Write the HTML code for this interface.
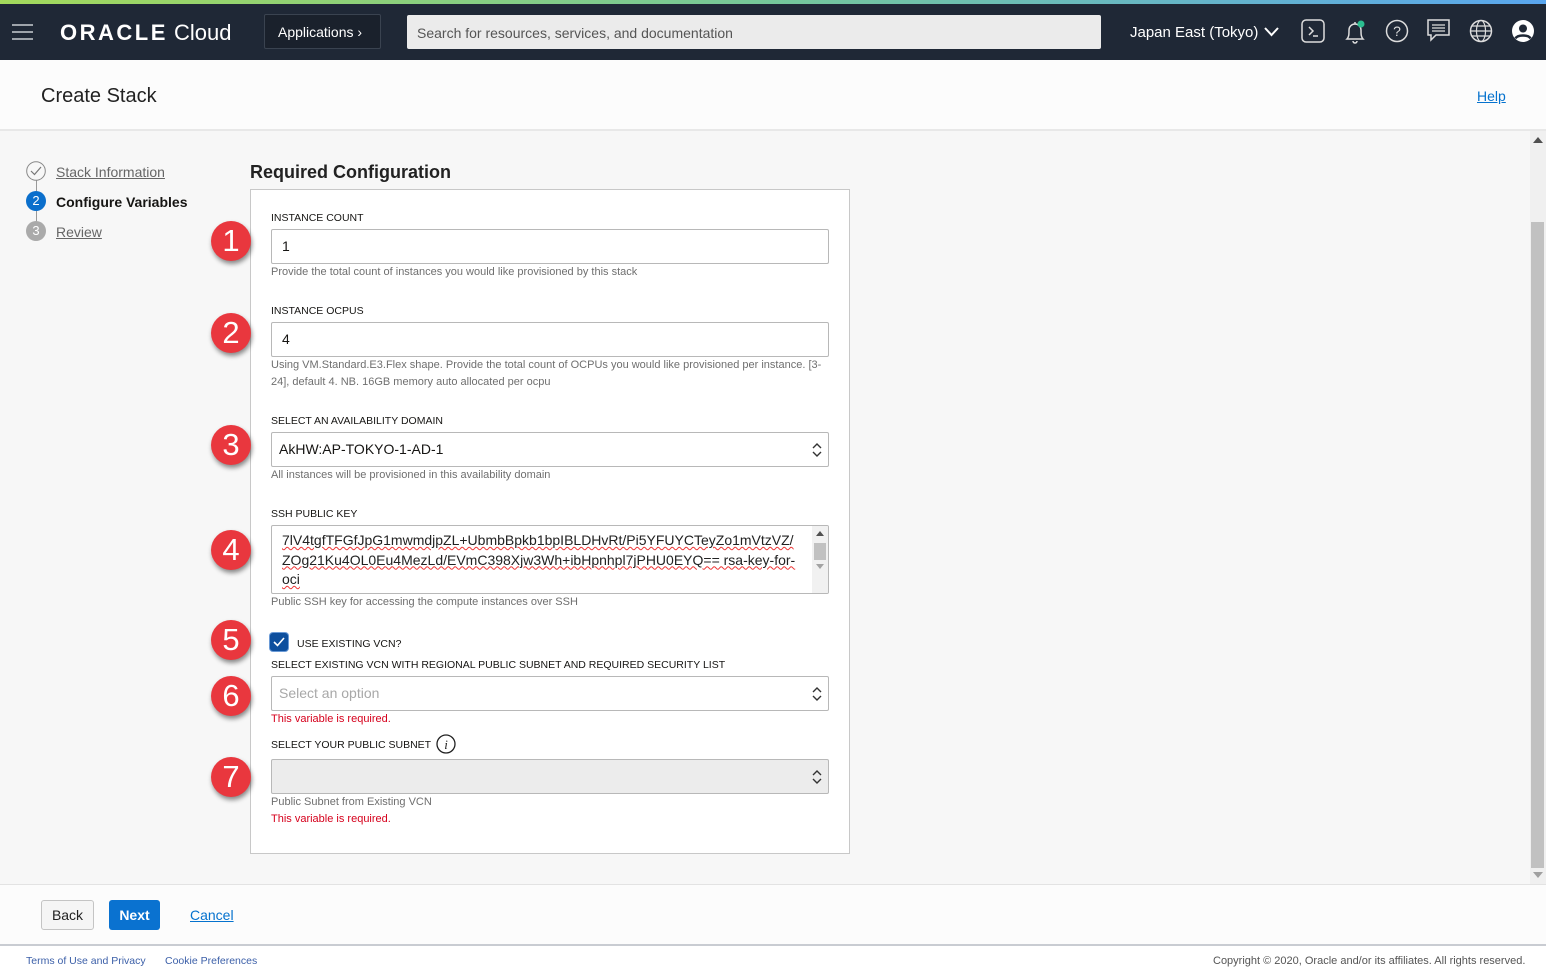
<!DOCTYPE html>
<html><head><meta charset="utf-8"><style>
*{box-sizing:border-box;margin:0;padding:0}
body{width:1546px;height:975px;position:relative;overflow:hidden;font-family:"Liberation Sans",Arial,sans-serif;background:#fff;color:#161513}
.a{position:absolute}
.lbl{position:absolute;left:271px;font-size:10.5px;color:#161513;white-space:nowrap}
.hlp{position:absolute;left:271px;font-size:11px;color:#6f6f6f;white-space:nowrap}
.err{position:absolute;left:271px;font-size:11px;color:#d6001c}
.inp{position:absolute;left:271px;width:558px;height:35px;border:1px solid #b8b8b8;border-radius:2px;background:#fff;font-size:14px;padding:0 0 0 10px;line-height:33px}
.sel{padding-left:7px}
.arr{position:absolute;right:6px;top:9px}
.badge{position:absolute;left:211px;width:40px;height:40px;border-radius:50%;background:#e9373e;color:#fff;font-size:31px;text-align:center;line-height:40px;box-shadow:1px 3px 5px rgba(0,0,0,.45)}
.ico{position:absolute;top:19px}
</style></head><body>
<div class="a" style="left:0;top:0;width:1546px;height:4px;background:linear-gradient(90deg,#a3d95c,#75c79a 50%,#59a6ef)"></div>
<div class="a" style="left:0;top:4px;width:1546px;height:56px;background:#1f2836"></div>
<svg class="a" style="left:12px;top:24px" width="22" height="16"><g stroke="#c9cdd2" stroke-width="1.6"><line x1="0" y1="1" x2="21" y2="1"/><line x1="0" y1="8" x2="21" y2="8"/><line x1="0" y1="15" x2="21" y2="15"/></g></svg>
<div class="a" style="left:60px;top:20px;color:#fff;font-size:22px;white-space:nowrap"><b style="font-weight:bold;letter-spacing:2.5px">ORACLE</b> Cloud</div>
<div class="a" style="left:264px;top:14px;width:117px;height:35px;border:1px solid #3a4350;border-radius:2px;background:#1a212c;color:#fff;font-size:14px;line-height:35px;padding-left:13px">Applications ›</div>
<div class="a" style="left:407px;top:15px;width:694px;height:34px;background:#ebebeb;border-radius:2px;color:#555;font-size:14px;line-height:36px;padding-left:10px">Search for resources, services, and documentation</div>
<div class="a" style="left:1130px;top:24px;color:#fff;font-size:15px">Japan East (Tokyo)</div>
<svg class="a" style="left:1264px;top:27px" width="15" height="10"><path d="M1 1L7.5 8L14 1" stroke="#fff" stroke-width="2" fill="none"/></svg>
<svg class="ico a" style="left:1301px" width="24" height="24"><rect x="1" y="1" width="22" height="22" rx="4" stroke="#ddd" stroke-width="1.5" fill="none"/><path d="M8 8l4 4-4 4M12 17h5" stroke="#ddd" stroke-width="1.5" fill="none"/></svg>
<svg class="ico a" style="left:1343px" width="24" height="26"><path d="M4 20c2-2 2-5 2-9a6 6 0 0112 0c0 4 0 7 2 9z M10 22a2 2 0 004 0M12 3v2" stroke="#ddd" stroke-width="1.5" fill="none"/><circle cx="18" cy="5" r="3.5" fill="#2bbf91"/></svg>
<svg class="ico a" style="left:1385px" width="24" height="24"><circle cx="12" cy="12" r="10.5" stroke="#ddd" stroke-width="1.5" fill="none"/><text x="12" y="17" font-size="14" fill="#ddd" text-anchor="middle" font-family="Liberation Sans">?</text></svg>
<svg class="ico a" style="left:1427px" width="24" height="24"><path d="M1 1h21v15H9l-5 5v-5H1z" stroke="#ddd" stroke-width="1.5" fill="none"/><path d="M5 6h13M5 9h13M5 12h13" stroke="#ddd" stroke-width="1.2"/></svg>
<svg class="ico a" style="left:1469px" width="24" height="24"><circle cx="12" cy="12" r="10.5" stroke="#ddd" stroke-width="1.5" fill="none"/><ellipse cx="12" cy="12" rx="4.5" ry="10.5" stroke="#ddd" stroke-width="1.2" fill="none"/><path d="M1.5 12h21M3 7h18M3 17h18" stroke="#ddd" stroke-width="1.2"/></svg>
<svg class="ico a" style="left:1511px" width="24" height="24"><circle cx="12" cy="12" r="11" fill="#fff"/><circle cx="12" cy="9.5" r="4" fill="#1f2836"/><path d="M4.5 19.5c2-4 13-4 15 0" stroke="#1f2836" stroke-width="2.5" fill="none"/></svg>

<div class="a" style="left:0;top:60px;width:1546px;height:71px;background:#fcfcfc;border-bottom:2px solid #e8e8e8"></div>
<div class="a" style="left:41px;top:85px;font-size:20px;color:#222">Create Stack</div>
<div class="a" style="left:1477px;top:88px;font-size:14px;color:#0572ce;text-decoration:underline">Help</div>

<div class="a" style="left:0;top:131px;width:1530px;height:753px;background:#f7f7f7"></div>
<div class="a" style="left:1530px;top:131px;width:16px;height:753px;background:#f0f0f0"></div>
<div class="a" style="left:1531px;top:222px;width:13px;height:646px;background:#c1c1c1"></div>
<svg class="a" style="left:1533px;top:137px" width="10" height="6"><path d="M0 6L5 0L10 6z" fill="#505050"/></svg>
<svg class="a" style="left:1533px;top:872px" width="10" height="6"><path d="M0 0L5 6L10 0z" fill="#a0a0a0"/></svg>

<div class="a" style="left:36px;top:180px;width:1px;height:42px;background:#999"></div>
<svg class="a" style="left:26px;top:161px" width="20" height="20"><circle cx="10" cy="10" r="9.3" fill="#f7f7f7" stroke="#888" stroke-width="1"/><path d="M5 10l3.5 3.5L15 6" stroke="#777" stroke-width="1.2" fill="none"/></svg>
<div class="a" style="left:56px;top:164px;font-size:14px;color:#666;text-decoration:underline">Stack Information</div>
<div class="a" style="left:26px;top:191px;width:20px;height:20px;border-radius:50%;background:#0b6fcc;color:#fff;font-size:13px;text-align:center;line-height:20px">2</div>
<div class="a" style="left:56px;top:194px;font-size:14px;font-weight:bold">Configure Variables</div>
<div class="a" style="left:26px;top:221px;width:20px;height:20px;border-radius:50%;background:#aaa;color:#fff;font-size:13px;text-align:center;line-height:20px">3</div>
<div class="a" style="left:56px;top:224px;font-size:14px;color:#666;text-decoration:underline">Review</div>

<div class="a" style="left:250px;top:162px;font-size:18px;font-weight:bold;color:#222">Required Configuration</div>
<div class="a" style="left:250px;top:189px;width:600px;height:665px;background:#fff;border:1px solid #c8c8c8"></div>

<div class="lbl" style="top:212px">INSTANCE COUNT</div>
<div class="inp" style="top:229px">1</div>
<div class="hlp" style="top:266px">Provide the total count of instances you would like provisioned by this stack</div>

<div class="lbl" style="top:305px">INSTANCE OCPUS</div>
<div class="inp" style="top:322px">4</div>
<div class="hlp" style="top:359px">Using VM.Standard.E3.Flex shape. Provide the total count of OCPUs you would like provisioned per instance. [3-</div>
<div class="hlp" style="top:376px">24], default 4. NB. 16GB memory auto allocated per ocpu</div>

<div class="lbl" style="top:415px">SELECT AN AVAILABILITY DOMAIN</div>
<div class="inp sel" style="top:432px">AkHW:AP-TOKYO-1-AD-1<svg class="arr" width="10" height="16"><path d="M1 6l4-4 4 4M1 10l4 4 4-4" stroke="#333" stroke-width="1.4" fill="none"/></svg></div>
<div class="hlp" style="top:469px">All instances will be provisioned in this availability domain</div>

<div class="lbl" style="top:508px">SSH PUBLIC KEY</div>
<div class="inp" style="top:525px;height:69px;overflow:hidden;line-height:19.5px;padding-top:5px;font-size:14px;color:#222">
<div style="text-decoration:underline wavy #e33;text-decoration-thickness:1px">7lV4tgfTFGfJpG1mwmdjpZL+UbmbBpkb1bpIBLDHvRt/Pi5YFUYCTeyZo1mVtzVZ/</div>
<div style="text-decoration:underline wavy #e33;text-decoration-thickness:1px">ZOg21Ku4OL0Eu4MezLd/EVmC398Xjw3Wh+ibHpnhpl7jPHU0EYQ== rsa-key-for-</div>
<div style="text-decoration:underline wavy #e33;text-decoration-thickness:1px">oci</div>
<div class="a" style="right:0;top:0;width:16px;height:67px;background:#f1f1f1"></div>
<div class="a" style="right:2px;top:17px;width:12px;height:17px;background:#c1c1c1"></div>
<svg class="a" style="right:4px;top:5px" width="8" height="5"><path d="M0 5L4 0L8 5z" fill="#505050"/></svg>
<svg class="a" style="right:4px;top:38px" width="8" height="5"><path d="M0 0L4 5L8 0z" fill="#a3a3a3"/></svg>
</div>
<div class="hlp" style="top:596px">Public SSH key for accessing the compute instances over SSH</div>

<div class="a" style="left:270px;top:633px;width:18px;height:18px;border-radius:3px;background:#0d4f9e;box-shadow:0 0 0 1px #6a9ad6"><svg width="18" height="18"><path d="M4 9l3.5 3.5L14 5" stroke="#fff" stroke-width="1.6" fill="none"/></svg></div>
<div class="lbl" style="left:297px;top:638px">USE EXISTING VCN?</div>
<div class="lbl" style="top:659px">SELECT EXISTING VCN WITH REGIONAL PUBLIC SUBNET AND REQUIRED SECURITY LIST</div>
<div class="inp sel" style="top:676px;color:#a8a8a8">Select an option<svg class="arr" width="10" height="16"><path d="M1 6l4-4 4 4M1 10l4 4 4-4" stroke="#333" stroke-width="1.4" fill="none"/></svg></div>
<div class="err" style="top:713px">This variable is required.</div>

<div class="lbl" style="top:739px">SELECT YOUR PUBLIC SUBNET</div>
<svg class="a" style="left:436px;top:734px" width="20" height="20"><circle cx="10" cy="10" r="9" stroke="#222" stroke-width="1.3" fill="none"/><text x="10" y="15" font-size="13" font-style="italic" text-anchor="middle" font-family="Liberation Serif" fill="#222">i</text></svg>
<div class="inp sel" style="top:759px;background:#ececec"><svg class="arr" width="10" height="16"><path d="M1 6l4-4 4 4M1 10l4 4 4-4" stroke="#333" stroke-width="1.4" fill="none"/></svg></div>
<div class="hlp" style="top:796px">Public Subnet from Existing VCN</div>
<div class="err" style="top:813px">This variable is required.</div>

<div class="badge" style="top:221px">1</div>
<div class="badge" style="top:313px">2</div>
<div class="badge" style="top:425px">3</div>
<div class="badge" style="top:530px">4</div>
<div class="badge" style="top:620px">5</div>
<div class="badge" style="top:676px">6</div>
<div class="badge" style="top:757px">7</div>

<div class="a" style="left:0;top:884px;width:1546px;height:62px;background:#fcfcfc;border-top:1px solid #e3e3e3;border-bottom:2px solid #c9ccd2"></div>
<div class="a" style="left:41px;top:900px;width:53px;height:30px;border:1px solid #c4c4c4;border-radius:3px;background:#f5f5f5;font-size:14px;text-align:center;line-height:28px;color:#222">Back</div>
<div class="a" style="left:109px;top:900px;width:51px;height:30px;border-radius:3px;background:#0a72d0;font-size:14px;font-weight:bold;text-align:center;line-height:30px;color:#fff">Next</div>
<div class="a" style="left:190px;top:907px;font-size:14px;color:#0572ce;text-decoration:underline">Cancel</div>
<div class="a" style="left:26px;top:955px;font-size:10.5px;color:#3b5fa8">Terms of Use and Privacy</div>
<div class="a" style="left:165px;top:955px;font-size:10.5px;color:#3b5fa8">Cookie Preferences</div>
<div class="a" style="left:1213px;top:955px;font-size:11px;color:#555;white-space:nowrap">Copyright © 2020, Oracle and/or its affiliates. All rights reserved.</div>
</body></html>
